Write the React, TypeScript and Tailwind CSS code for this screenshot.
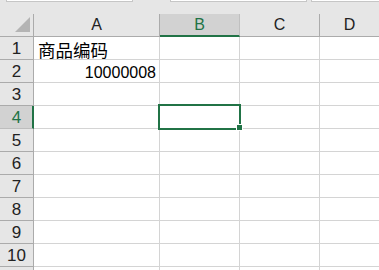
import React from "react";

const GREEN = "#217346";

export default function App() {
  const rows = Array.from({ length: 11 }, (_, i) => i + 1);
  const font = { fontFamily: '"Liberation Sans", Arial, sans-serif' };
  const cjk = { fontFamily: '"Noto Sans CJK SC", "Liberation Sans", sans-serif' };
  return (
    <div className="relative w-[379px] h-[270px] overflow-hidden bg-[#e6e6e6]" style={font}>
      {/* formula bar bottoms */}
      <div className="flex h-[3px]">
        <div className="ml-[6px] w-[127px] h-[2px] bg-white border-b border-x border-[#c6c6c6]" />
        <div className="ml-[37px] w-[137px] h-[2px] bg-white border-b border-x border-[#c6c6c6]" />
        <div className="ml-[4px] flex-1 h-[2px] bg-white border-b border-l border-[#c6c6c6]" />
      </div>
      <div className="h-[11px]" />
      {/* column header */}
      <div className="flex h-[23px] text-[16px] text-[#222]">
        <div className="w-[34px] border-r border-b border-[#ababab] relative">
          <div
            className="absolute left-[15px] top-[3px] w-[15px] h-[15px] bg-[#b4b4b4]"
            style={{ clipPath: "polygon(100% 0, 100% 100%, 0 100%)" }}
          />
        </div>
        <div className="w-[126px] border-r border-b border-[#ababab] flex items-center justify-center">A</div>
        <div className="w-[80px] border-r border-[#c0c0c0] bg-[#d2d2d2] border-b-2 border-b-[#217346] flex items-center justify-center text-[#217346]">B</div>
        <div className="w-[80px] border-r border-b border-[#ababab] flex items-center justify-center">C</div>
        <div className="flex-1 border-b border-[#ababab] flex items-center justify-center">D</div>
      </div>
      {/* rows */}
      {rows.map((r) => {
        const sel = r === 4;
        return (
          <div key={r} className="flex h-[23px]">
            <div
              className={
                sel
                  ? "w-[34px] bg-[#d2d2d2] border-b border-[#bdbdbd] border-r-2 border-r-[#217346] flex items-center justify-center text-[17px] text-[#217346] pl-[1px] pt-[2px]"
                  : "w-[34px] border-b border-r border-[#ababab] flex items-center justify-center text-[17px] text-[#222] pt-[2px]"
              }
            >
              {r <= 10 ? r : ""}
            </div>
            <div className="w-[126px] bg-white border-r border-b border-[#d4d4d4] flex items-end">
              {r === 1 && (
                <span className="pl-[4px] text-[17.5px] leading-[22px] text-black relative top-[2px]" style={cjk}>
                  商品编码
                </span>
              )}
              {r === 2 && (
                <span className="ml-auto pr-[3px] text-[16px] leading-[22px] text-black relative top-[2px]">10000008</span>
              )}
            </div>
            <div className="w-[80px] bg-white border-r border-b border-[#d4d4d4]" />
            <div className="w-[80px] bg-white border-r border-b border-[#d4d4d4]" />
            <div className="flex-1 bg-white border-b border-[#d4d4d4]" />
          </div>
        );
      })}
      {/* selection box */}
      <div
        className="absolute left-[158px] top-[104px] w-[83px] h-[26px] border-2"
        style={{ borderColor: GREEN }}
      />
      <div className="absolute left-[236px] top-[124px] w-[7px] h-[7px] bg-[#217346] border border-white" />
    </div>
  );
}
